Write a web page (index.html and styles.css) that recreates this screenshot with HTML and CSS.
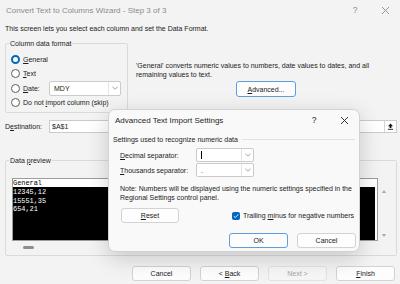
FILE: index.html
```html
<!DOCTYPE html>
<html lang="en">
<head>
    <meta charset="UTF-8">
    <title>Convert Text to Columns Wizard</title>
    <link rel="stylesheet" href="styles.css">
</head>
<body>
    <div class="wizard">
        <div class="titlebar">
            <span class="titlebar-text">Convert Text to Columns Wizard - Step 3 of 3</span>
            <span class="titlebar-btn">?</span>
            <span class="titlebar-btn">
                <svg width="9" height="9" viewBox="0 0 9 9"><path d="M1 1 L8 8 M8 1 L1 8" stroke="currentColor" stroke-width="0.9" fill="none"/></svg>
            </span>
        </div>

        <p class="intro">This screen lets you select each column and set the Data Format.</p>

        <div class="format-row">
            <fieldset class="group format-group">
                <legend>Column data format</legend>
                <div class="radio-row"><span class="radio checked"></span><span><u>G</u>eneral</span></div>
                <div class="radio-row"><span class="radio"></span><span><u>T</u>ext</span></div>
                <div class="radio-row">
                    <span class="radio"></span>
                    <span class="date-label"><u>D</u>ate:</span>
                    <div class="select date-select">
                        <span class="select-value">MDY</span>
                        <span class="select-arrow">
                            <svg width="6" height="4" viewBox="0 0 6 4"><path d="M0.5 0.8 L3 3.2 L5.5 0.8" stroke="#8a8a8a" stroke-width="0.8" fill="none"/></svg>
                        </span>
                    </div>
                </div>
                <div class="radio-row"><span class="radio"></span><span>Do not <u>i</u>mport column (skip)</span></div>
            </fieldset>

            <div class="format-info">
                <p>'General' converts numeric values to numbers, date values to dates, and all<br>remaining values to text.</p>
                <button class="btn btn-default advanced-btn"><u>A</u>dvanced...</button>
            </div>
        </div>

        <div class="dest-row">
            <label class="dest-label">D<u>e</u>stination:</label>
            <div class="ref-input">
                <span>$A$1</span>
                <span class="ref-btn">
                    <svg width="7" height="7" viewBox="0 0 7 7"><path d="M3.5 0.5 L6 3.2 H4.4 V5 H2.6 V3.2 H1 Z" fill="#111"/><path d="M1 6.3 H6" stroke="#111" stroke-width="0.9"/></svg>
                </span>
            </div>
        </div>

        <fieldset class="group preview-group">
            <legend>Data <u>p</u>review</legend>
            <div class="preview">
                <div class="grid">
                    <div class="grid-head">General</div>
                    <div class="grid-body">12345,12<br>15551,35<br>654,21</div>
                </div>
                <div class="vscroll">
                    <span class="arrow-up"></span>
                    <span class="arrow-down"></span>
                </div>
            </div>
            <div class="hscroll"><span class="hscroll-thumb"></span></div>
        </fieldset>

        <div class="actions">
            <button class="btn">Cancel</button>
            <button class="btn">&lt; <u>B</u>ack</button>
            <button class="btn" disabled>Next &gt;</button>
            <button class="btn"><u>F</u>inish</button>
        </div>

        <div class="modal">
            <div class="modal-titlebar">
                <span class="modal-title">Advanced Text Import Settings</span>
                <span class="titlebar-btn">?</span>
                <span class="titlebar-btn">
                    <svg width="9" height="9" viewBox="0 0 9 9"><path d="M1 1 L8 8 M8 1 L1 8" stroke="currentColor" stroke-width="0.9" fill="none"/></svg>
                </span>
            </div>

            <div class="section-head">Settings used to recognize numeric data</div>

            <div class="field-row">
                <label class="field-label"><u>D</u>ecimal separator:</label>
                <div class="select sep-select">
                    <span class="select-value"><span class="caret"></span></span>
                    <span class="select-arrow">
                        <svg width="6" height="4" viewBox="0 0 6 4"><path d="M0.5 0.8 L3 3.2 L5.5 0.8" stroke="#8a8a8a" stroke-width="0.8" fill="none"/></svg>
                    </span>
                </div>
            </div>
            <div class="field-row field-row-next">
                <label class="field-label"><u>T</u>housands separator:</label>
                <div class="select sep-select">
                    <span class="select-value">.</span>
                    <span class="select-arrow">
                        <svg width="6" height="4" viewBox="0 0 6 4"><path d="M0.5 0.8 L3 3.2 L5.5 0.8" stroke="#8a8a8a" stroke-width="0.8" fill="none"/></svg>
                    </span>
                </div>
            </div>

            <p class="note">Note: Numbers will be displayed using the numeric settings specified in the<br>Regional Settings control panel.</p>

            <div class="option-row">
                <button class="btn reset-btn"><u>R</u>eset</button>
                <label class="check-label">
                    <span class="checkbox">
                        <svg width="8" height="8" viewBox="0 0 8 8"><path d="M1.8 4.2 L3.3 5.6 L6.3 2.4" stroke="#fff" stroke-width="0.9" fill="none"/></svg>
                    </span>
                    <span>Trailing <u>m</u>inus for negative numbers</span>
                </label>
            </div>

            <div class="modal-actions">
                <button class="btn btn-default">OK</button>
                <button class="btn">Cancel</button>
            </div>
        </div>
    </div>
</body>
</html>
```

FILE: styles.css
```css
:root {
    --bg-color: #f3f3f3;
    --dialog-bg: #f9f9f9;
    --text-color: #1b1b1b;
    --muted-color: #8c8c8c;
    --group-border: #dadada;
    --field-border: #cbcbcb;
    --accent-color: #0067c0;
    --focus-color: #5d9ee0;
    --ui-font: "Liberation Sans", Arial, sans-serif;
    --mono-font: "Liberation Mono", "DejaVu Sans Mono", monospace;
}

* {
    margin: 0;
    padding: 0;
    box-sizing: border-box;
}

html, body {
    width: 400px;
    height: 284px;
    overflow: hidden;
}

body {
    font-family: var(--ui-font);
    font-size: 7px;
    line-height: 9px;
    color: var(--text-color);
    background: var(--bg-color);
}

u {
    text-decoration-thickness: 0.5px;
    text-underline-offset: 1px;
}

.wizard {
    position: relative;
    width: 400px;
    height: 284px;
    padding: 0 3px 0 5px;
}

/* title bars */
.titlebar {
    display: flex;
    align-items: center;
    height: 20px;
    margin: 0 -3px 0 -5px;
    padding-left: 6px;
    color: var(--muted-color);
}

.titlebar-text {
    flex: 1;
    font-size: 8px;
}

.titlebar-btn {
    width: 30px;
    display: flex;
    justify-content: center;
    align-items: center;
    font-size: 8.5px;
}

.intro {
    margin-top: 4px;
    line-height: 10px;
}

/* group boxes */
.group {
    min-width: 0;
    border: 1px solid var(--group-border);
    border-radius: 2px;
}

.group legend {
    padding: 0 1px;
    line-height: 9px;
}

.format-row {
    display: flex;
    align-items: flex-start;
    margin-top: 5px;
}

.format-group {
    width: 123px;
    padding: 4px 3px 2px 3px;
}

.radio-row {
    display: flex;
    align-items: center;
    height: 14.5px;
}

.radio {
    width: 9px;
    height: 9px;
    margin: 0 3px 0 2px;
    border: 1px solid #5c5c5c;
    border-radius: 50%;
    background: #fff;
}

.radio.checked {
    border: 2.8px solid var(--accent-color);
}

.date-label {
    width: 26px;
}

.select {
    display: flex;
    align-items: center;
    background: #fff;
    border: 1px solid var(--field-border);
    border-radius: 2px;
}

.select-value {
    flex: 1;
    padding-left: 4px;
    display: flex;
    align-items: center;
}

.select-arrow {
    width: 12px;
    height: 100%;
    display: flex;
    align-items: center;
    justify-content: center;
    border-left: 1px solid #e4e4e4;
}

.date-select {
    width: 72px;
    height: 15px;
}

.format-info {
    margin-left: 8px;
    padding-top: 21.5px;
}

/* buttons */
.btn {
    font: inherit;
    color: var(--text-color);
    background: #fdfdfd;
    border: 1px solid #d3d3d3;
    border-radius: 3px;
    width: 59px;
    height: 15px;
}

.btn-default {
    border-color: var(--focus-color);
}

.btn:disabled {
    color: #a3a3a3;
    background: #f6f6f6;
    border-color: #e2e2e2;
}

.advanced-btn {
    display: block;
    width: 60px;
    height: 16px;
    margin: 2.5px 0 0 100px;
}

/* destination */
.dest-row {
    display: flex;
    align-items: center;
    height: 13px;
    margin-top: 7px;
}

.dest-label {
    width: 44px;
}

.ref-input {
    flex: 1;
    height: 13px;
    display: flex;
    align-items: center;
    justify-content: space-between;
    padding-left: 2px;
    background: #fff;
    border: 1px solid var(--field-border);
}

.ref-btn {
    width: 11px;
    height: 11px;
    margin-right: 1px;
    display: flex;
    align-items: center;
    justify-content: center;
    border-left: 1px solid #d6d6d6;
}

/* data preview */
.preview-group {
    margin-top: 22.5px;
    padding: 13.5px 3px 6px 3px;
}

.preview {
    display: flex;
    margin-left: 3px;
}

.grid {
    width: 366px;
    height: 63px;
    border: 1px solid #9c9c9c;
    background: #fff;
    font-family: var(--mono-font);
    font-size: 6.9px;
}

.grid-head {
    height: 8px;
    line-height: 8px;
    color: #000;
}

.grid-body {
    height: 53px;
    margin-right: 2px;
    padding-top: 1px;
    line-height: 8.5px;
    color: #fff;
    background: #000;
}

.vscroll {
    width: 11px;
    height: 54px;
    margin-top: 9px;
    padding: 2.5px 0 4.5px;
    display: flex;
    flex-direction: column;
    justify-content: space-between;
    align-items: center;
}

.arrow-up,
.arrow-down {
    width: 0;
    height: 0;
    border-left: 2.5px solid transparent;
    border-right: 2.5px solid transparent;
}

.arrow-up {
    border-bottom: 3px solid #a8a8a8;
}

.arrow-down {
    border-top: 3px solid #a8a8a8;
}

.hscroll {
    height: 2.5px;
    margin-top: 5px;
}

.hscroll-thumb {
    display: block;
    width: 11px;
    height: 2.5px;
    margin-left: 14px;
    border-radius: 2px;
    background: #8e8e8e;
}

.actions {
    display: flex;
    justify-content: flex-end;
    gap: 9px;
    margin-top: 10.5px;
    padding-right: 2px;
}

/* advanced settings dialog */
.modal {
    position: absolute;
    left: 108px;
    top: 109px;
    width: 252px;
    height: 143px;
    background: var(--dialog-bg);
    border: 1px solid #d2d2d2;
    border-radius: 7px;
    box-shadow: 0 6px 22px rgba(0, 0, 0, 0.18);
}

.modal-titlebar {
    display: flex;
    align-items: center;
    height: 20px;
    padding-left: 6px;
    color: #1f1f1f;
}

.modal-title {
    flex: 1;
    font-size: 8px;
}

.section-head {
    display: flex;
    align-items: center;
    margin-top: 4.5px;
    padding: 0 4px;
}

.section-head::after {
    content: "";
    flex: 1;
    height: 1px;
    margin-left: 4px;
    background: #e2e2e2;
}

.field-row {
    display: flex;
    align-items: center;
    margin-top: 4.5px;
    padding-left: 11px;
}

.field-row-next {
    margin-top: 1px;
}

.field-label {
    width: 76px;
}

.sep-select {
    width: 58px;
    height: 14px;
}

.caret {
    display: block;
    width: 1px;
    height: 8px;
    background: #000;
}

.note {
    margin-top: 6.5px;
    padding-left: 11px;
}

.option-row {
    display: flex;
    align-items: center;
    margin-top: 6.5px;
    padding: 0 5px 0 12px;
}

.reset-btn {
    width: 58px;
}

.check-label {
    display: flex;
    align-items: center;
    margin-left: auto;
}

.checkbox {
    width: 8px;
    height: 8px;
    margin-right: 3px;
    display: flex;
    border-radius: 2px;
    background: var(--accent-color);
}

.modal-actions {
    display: flex;
    justify-content: flex-end;
    gap: 9px;
    margin-top: 10px;
    padding-right: 3px;
}
```
